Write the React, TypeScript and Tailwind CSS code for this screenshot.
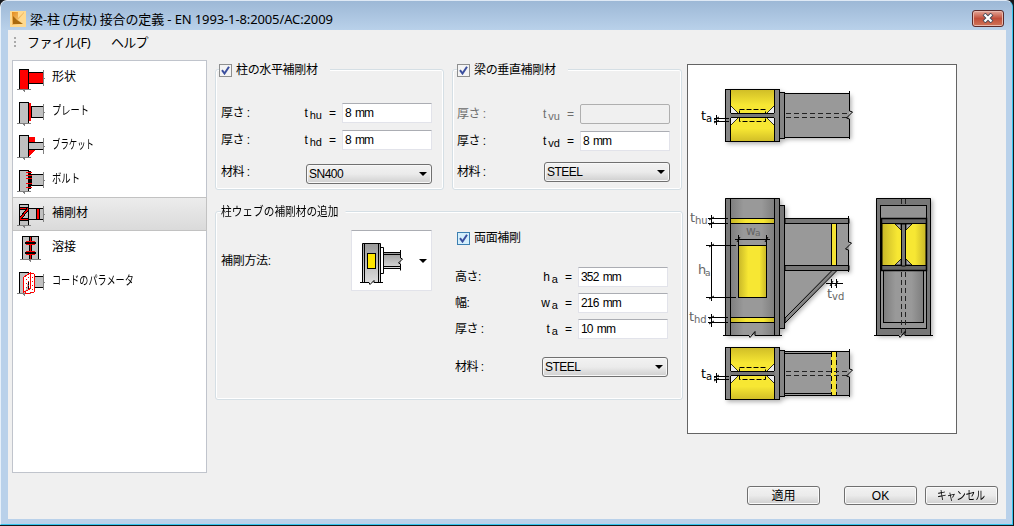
import type { ReactNode } from 'react';

const ui = "font-['Liberation_Sans','Noto_Sans_CJK_JP',sans-serif]";

function Col({ top = 7.5, fill = '#c0c0c0' }: { top?: number; fill?: string }) {
  return (
    <>
      <rect x="19.5" y={top} width="9" height={28.5 - top} fill={fill} stroke="#000" />
      <path d="M17 28.5H31M23 28.5l2 2M43.5 9V25" stroke="#808080" fill="none" />
    </>
  );
}

const beam = (x: number, y = 11.5, h = 11, fill = '#c0c0c0') => (
  <>
    <rect x={x} y={y} width={43.5 - x} height={h} fill={fill} />
    <path d={`M43 ${y}H${x}V${y + h}H43`} fill="none" stroke="#000" />
    <path d="M43.5 9V25M43 18l2-1" stroke="#808080" />
  </>
);

const icons: Record<string, ReactNode> = {
  shape: <><Col top={8.5} fill="#f00" />{beam(28.5, 11.5, 11, '#f00')}</>,
  plate: <><Col />{beam(31.5)}<rect x="29" y="8" width="2" height="17.5" fill="#f00" /></>,
  bracket: <><Col top={6.5} />{beam(28.5, 13.5, 7)}<path d="M29 8h6v5h-6zM29 21h6l-6 6z" fill="#f00" /></>,
  bolt: (
    <>
      <Col />{beam(31.5)}
      <rect x="28" y="8" width="3" height="18" fill="#000" />
      <path d="M26 9.5h6M26 12.5h6M26 15.5h6M26 20.5h6M26 24.5h6" stroke="#f00" />
    </>
  ),
  stiff: (
    <>
      <Col />{beam(28.5)}
      <path d="M20 11H28M20 22.5H28" stroke="#000" strokeWidth="3" />
      <path d="M20 11.5H28M20 22.5H28" stroke="#f00" />
      <path d="M20 22L28 12" stroke="#000" strokeWidth="3" />
      <path d="M20 22L28 12" stroke="#f00" strokeWidth="1.2" />
      <path d="M36.5 12v10M39.5 12v10" stroke="#000" />
      <path d="M38 12v10" stroke="#f00" strokeWidth="2" />
    </>
  ),
  weld: (
    <>
      <rect x="22.5" y="5.5" width="16" height="23" fill="#c0c0c0" stroke="#000" />
      <path d="M20 28.5h21M29 28.5l2 2" stroke="#808080" />
      <path d="M30.5 6v22" stroke="#000" strokeWidth="3" />
      <path d="M30.5 6v22M26 10.5h9M26 20.5h9M26 13.5h9M26 23.5h9" stroke="#f00" />
      <path d="M25 12h11M25 22h11" stroke="#000" strokeWidth="2" />
    </>
  ),
  code: (
    <>
      <Col />{beam(32.5)}
      <path d="M23.5 12.5l7-5v16l-7 4zM25 27l1 2 8-2V9l-3-1" fill="#fff" stroke="#f00" />
      <path d="M26 14h1M28 12h1M26 18h1M28 16h1M26 22h1M28 20h1M32 12h1M32 16h1M32 20h1M32 24h1M26 25h1" stroke="#f00" />
    </>
  ),
};

const items = [
  ['shape', '形状', ''],
  ['plate', 'プレート', 'scale-x-[0.77]'],
  ['bracket', 'ブラケット', 'scale-x-[0.7]'],
  ['bolt', 'ボルト', 'scale-x-[0.78]'],
  ['stiff', '補剛材', ''],
  ['weld', '溶接', ''],
  ['code', 'コードのパラメータ', 'scale-x-[0.76]'],
];

function Check({ label, focus = false, className = '' }: { label: string; focus?: boolean; className?: string }) {
  return (
    <div className={`flex w-fit items-center bg-[#f0f0f0] pr-3 leading-[14px] ${className}`}>
      <span className={`mr-1 flex size-[13px] items-center justify-center border ${focus ? 'border-[#3c7fb1] bg-[#d5effc]' : 'border-[#8e8f8f] bg-[#f4f4f4]'}`}>
        <svg width="9" height="9" viewBox="0 0 9 9"><path d="M1 4.2L3.5 7.5L8 .8" fill="none" stroke="#3b4f9e" strokeWidth="2" /></svg>
      </span>
      <span className="tracking-[-0.35px]">{label}</span>
    </div>
  );
}

interface FieldProps {
  label: string;
  base: string;
  sub: string;
  value: string;
  disabled?: boolean;
  className?: string;
}

function Field({ label, base, sub, value, disabled = false, className = '' }: FieldProps) {
  return (
    <div className={`flex h-[20px] items-center ${disabled ? 'text-[#6d6d6d]' : 'text-black'} ${className}`}>
      <span className="-ml-px tracking-[-0.5px]">{label}</span>
      <span className="ml-auto flex items-baseline text-[12px]">
        {base}
        <span className="relative top-[2px] ml-[2px] text-[11px]">{sub}</span>
        <span className="ml-[7px] mr-[6px]">=</span>
      </span>
      <span className={`flex h-[20px] w-[90px] items-center border pl-[2px] tracking-[-0.8px] [word-spacing:1.5px] ${disabled ? 'rounded-[2px] border-[#afafaf] bg-[#f0f0f0]' : 'border-[#e2e3ea] border-t-[#abadb3] bg-white'}`}>
        {value}
      </span>
    </div>
  );
}

function Material({ value, className = '', labelClass = '' }: { value: string; className?: string; labelClass?: string }) {
  return (
    <div className={`flex h-[20px] items-center ${className}`}>
      <span className={`-ml-px tracking-[-0.5px] ${labelClass}`}>材料 :</span>
      <span className="ml-auto flex h-[20px] w-[126px] items-center justify-between rounded-[3px] border border-[#707070] bg-linear-to-b from-[#f2f2f2] via-[#ebebeb] via-50% to-[#cfcfcf] pl-[2px] pr-[4px] tracking-[-0.5px] shadow-[inset_0_0_0_1px_#f8f8f8]">
        {value}
        <svg width="8" height="4" viewBox="0 0 8 4"><path d="M0 0h8L4 4z" /></svg>
      </span>
    </div>
  );
}

const group = 'border border-[#d5dfe5] rounded-[3px] shadow-[inset_0_0_0_1px_#fff]';

function PlanView({ dy, bottom = false }: { dy: number; bottom?: boolean }) {
  return (
    <g transform={`translate(0 ${dy})`}>
      <g filter="url(#shadow)">
        <rect x="725.5" y="89.5" width="54" height="52" fill="#858585" stroke="#000" />
        <rect x="779.5" y="92.5" width="5" height="46" fill="#858585" stroke="#000" />
        <rect x="784.5" y="93.5" width="65" height="44" fill="#999" />
      </g>
      <path d="M849 93.5H784.5V137.5H849" fill="none" stroke="#000" />
      <rect x="730.5" y="89.5" width="44" height="52" fill="url(#yv)" stroke="#000" />
      <path d="M731 106l7 7h-7zM774 106l-7 7h7zM731 125l7-7h-7zM774 125l-7-7h7z" fill="#ececec" />
      <path d="M731 106l7 7M774 106l-7 7M731 125l7-7M774 125l-7-7" stroke="#000" strokeWidth=".8" />
      <rect x="739.5" y="109.5" width="26" height="12" fill="none" stroke="#000" strokeDasharray="5 2" />
      <rect x="730" y="113" width="45" height="5" fill="#777" />
      <path d="M731 113.5h43M731 117.5h43" stroke="#000" />
      {bottom && (
        <>
          <path d="M785 95.5h46M785 135.5h46" stroke="#000" />
          <rect x="831" y="94" width="5" height="43" fill="#f5e333" />
          <path d="M831.5 94v43M836.5 94v43" stroke="#000" strokeDasharray="5 3" />
        </>
      )}
      <path d="M786 113.5h62M786 117.5h62" stroke="#222" strokeDasharray="5 3" />
      <path d="M849.5 91v20l3 1-6 6 3 1v20" fill="none" stroke="#000" />
      <path d="M714 118.5h15M714 121.5h15M716.5 115v10M714 120l5-3M714 123l5-3" stroke="#000" fill="none" />
      <text x="701" y="120" fontSize="13">t</text>
      <text x="706" y="122" fontSize="10">a</text>
    </g>
  );
}

function Drawing() {
  return (
    <svg width="268" height="368" viewBox="688 65 268 368" fontFamily="DejaVu Sans, sans-serif">
      <defs>
        <linearGradient id="yv" x2="0" y2="1"><stop stopColor="#d0bd27" /><stop offset=".3" stopColor="#f7e733" /><stop offset=".75" stopColor="#f7e733" /><stop offset="1" stopColor="#d0bd27" /></linearGradient>
        <linearGradient id="yh"><stop stopColor="#c8b728" /><stop offset=".35" stopColor="#f7e733" /><stop offset=".75" stopColor="#f7e733" /><stop offset="1" stopColor="#c8b728" /></linearGradient>
        <linearGradient id="gh"><stop stopColor="#7d7d7d" /><stop offset=".3" stopColor="#999" /><stop offset=".7" stopColor="#999" /><stop offset="1" stopColor="#7d7d7d" /></linearGradient>
        <filter id="shadow" x="-10%" y="-10%" width="125%" height="125%"><feDropShadow dx="2" dy="2" stdDeviation="2" floodOpacity=".3" /></filter>
      </defs>
      <PlanView dy={0} />
      <PlanView dy={258} bottom />

      <g filter="url(#shadow)">
        <rect x="725" y="198" width="55" height="137" fill="#777" />
        <rect x="779.5" y="205.5" width="5" height="123" fill="#777" stroke="#000" />
        <path d="M785 218h64v53h-13l-51 52z" fill="#999" />
      </g>
      <rect x="730" y="198" width="45" height="137" fill="url(#gh)" />
      <path d="M725.5 335V198.5H779.5V335M730.5 198v137M774.5 198v137" fill="none" stroke="#000" />
      <path d="M779.5 205.5h5v123h-5z" fill="#777" stroke="#000" />
      <rect x="730.5" y="218.5" width="44" height="5" fill="url(#yh)" stroke="#000" />
      <rect x="730.5" y="317.5" width="44" height="5" fill="url(#yh)" stroke="#000" />
      <rect x="738.5" y="245.5" width="28" height="52" fill="url(#yh)" stroke="#000" />
      <path d="M785 218.5h64v5h-64zM785 265.5h64v5h-64z" fill="#777" stroke="#000" />
      <rect x="831.5" y="223.5" width="5" height="42" fill="#f5e333" stroke="#000" />
      <path d="M831.5 271L785 318v5l51.5-52" fill="#858585" stroke="#000" />
      <path d="M848.5 216v26l3 1-6 6 3 1v22M723 335.5h26l1 2 5-6v4h27" fill="none" stroke="#000" />
      <path d="M708 218.5h20M708 223.5h20M711.5 215v13M709 220l5-3M709 225l5-3M708 317.5h20M708 322.5h20M711.5 314v13M709 319l5-3M709 324l5-3M706 245.5h30M706 297.5h30M711.5 242v59M709 247l5-3M709 299l5-3M735 239.5h35M738.5 235v10M766.5 235v10M737 242l3-5M765 242l3-5M826 283.5h17M831.5 279v9M836.5 279v9M830 286l3-5M835 286l3-5" fill="none" stroke="#000" />
      <g fill="#666">
        <text x="690" y="222" fontSize="13">t</text><text x="695" y="224" fontSize="10">hu</text>
        <text x="689" y="321" fontSize="13">t</text><text x="694" y="323" fontSize="10">hd</text>
        <text x="698" y="274" fontSize="13">h</text><text x="705" y="276" fontSize="9">a</text>
        <text x="746" y="235" fontSize="12">w</text><text x="755" y="236" fontSize="9">a</text>
        <text x="827" y="298" fontSize="13">t</text><text x="832" y="300" fontSize="10">vd</text>
      </g>

      <rect x="876" y="198" width="55" height="137" fill="#777" filter="url(#shadow)" />
      <path d="M876.5 335V198.5H930.5V335" fill="none" stroke="#000" />
      <rect x="880.5" y="205.5" width="46" height="123" fill="#929292" stroke="#000" />
      <rect x="883.5" y="270.5" width="40" height="52" fill="url(#gh)" stroke="#000" />
      <rect x="881.5" y="218.5" width="45" height="52" fill="#666" stroke="#000" strokeWidth="1.5" />
      <rect x="882" y="223.5" width="44" height="42" fill="url(#yh)" stroke="#000" />
      <path d="M895 224h6v6zM912 224h-6v6zM895 265h6v-6zM912 265h-6v-6z" fill="#aaa" stroke="#000" strokeWidth=".8" />
      <path d="M901.5 224h4v42h-4z" fill="#777" stroke="#000" />
      <path d="M901.5 199v7M905.5 199v7M901.5 272v63M905.5 272v63" stroke="#222" strokeDasharray="5 3" />
      <path d="M874 335.5h25l1 2 5-6v4h28" fill="none" stroke="#000" />
    </svg>
  );
}

function MethodPicker() {
  return (
    <div className="mr-[10px] flex h-[61px] w-[81px] items-center border border-[#e2e3ea] border-t-[#abadb3] bg-white">
      <svg width="79" height="59" viewBox="352 231 79 59">
        <defs><linearGradient id="mc" x2="0" y2="1"><stop stopColor="#999" /><stop offset="1" stopColor="#ddd" /></linearGradient></defs>
        <rect x="362.5" y="243.5" width="18" height="39" fill="url(#mc)" />
        <rect x="383" y="252" width="18" height="17" fill="url(#mc)" />
        <path d="M362.5 282V243.5h18V282M364.5 244v38M378.5 244v38M380.5 247.5h3v26h-3M383 252.5h18M383 254.5h18M383 266.5h18M383 268.5h18M400.5 250v8l2 1-4 4 2 1v6.5M360 282.5h9l1 2 4-4v2h9" fill="none" stroke="#000" />
        <rect x="367.5" y="253.5" width="8" height="15" fill="#ffe600" stroke="#000" />
        <path d="M419 259h8l-4 4z" />
      </svg>
    </div>
  );
}

function Button({ children }: { children: ReactNode }) {
  return (
    <button className="flex h-[19px] w-[73px] items-center justify-center rounded-[3px] border border-[#707070] bg-linear-to-b from-[#f2f2f2] via-[#ebebeb] via-50% to-[#cfcfcf] leading-[16px] shadow-[inset_0_0_0_1px_#fafafa]">
      {children}
    </button>
  );
}

export default function App() {
  return (
    <div className="h-[526px] w-[1014px] bg-[#16181c]">
      <div className={`flex h-[525px] w-[1013px] flex-col overflow-hidden rounded-t-[7px] border border-t-[#dfe9f5] border-l-[#e6f0fa] border-r-[#35c5ee] border-b-[#35c5ee] bg-[#b9d1ea] pr-[6px] pb-[5px] pl-[7px] text-[12px] text-black ${ui}`}>
        <header className="-ml-[7px] -mr-[6px] flex h-[29px] shrink-0 items-center bg-linear-to-b from-[#9db8d6] to-[#b9d1ea] pt-[7px] pl-[9px]">
          <svg width="16" height="16" viewBox="0 0 16 16">
            <defs><linearGradient id="logo" x2="1" y2="1"><stop stopColor="#e38b1c" /><stop offset="1" stopColor="#ffe2a0" /></linearGradient></defs>
            <rect width="16" height="16" fill="#ffd98e" />
            <path d="M2 1h6v6l6-6v1l-6 7 6 4-12 1z" fill="url(#logo)" />
            <path d="M3 13V5l4 4 6 4z" fill="#a8690e" />
          </svg>
          <h1 className="ml-[4px] whitespace-nowrap font-['Noto_Sans','Noto_Sans_CJK_JP',sans-serif] text-[13px] leading-[16px] tracking-[-0.12px]">梁-柱 (方杖) 接合の定義 - EN 1993-1-8:2005/AC:2009</h1>
          <button className="mr-[8px] -mt-[2px] ml-auto flex h-[17px] w-[32px] items-center justify-center rounded-[3px] border border-[#5b2a2a] bg-linear-to-b from-[#e3a698] via-[#c14e3a] via-50% to-[#cf7457] shadow-[inset_0_0_0_1px_#e9b8ac]">
            <svg width="12" height="10" viewBox="0 0 12 10"><path d="M2 1l8 8M10 1l-8 8" stroke="#454a58" strokeWidth="4" /><path d="M2.5 1.5l7 7M9.5 1.5l-7 7" stroke="#fff" strokeWidth="2.3" /></svg>
          </button>
        </header>

        <div className="flex min-h-0 flex-1 flex-col bg-[#f0f0f0]">
          <nav className="flex h-[26px] shrink-0 items-center pl-[6px] font-['Noto_Sans','Noto_Sans_CJK_JP',sans-serif] text-[13px] leading-[16px]">
            <svg width="2" height="12" viewBox="0 0 2 12"><path d="M1 0v12" stroke="#aaa" strokeWidth="2" strokeDasharray="2 2" /></svg>
            <span className="-mt-[2px] ml-[11px] w-[84px] tracking-[-0.5px]">ファイル(F)</span>
            <span className="-mt-[2px] tracking-[-0.8px]">ヘルプ</span>
          </nav>

          <div className="flex h-[417px] shrink-0 pl-[4px]">
            <ul className="mt-[4px] h-[413px] w-[195px] shrink-0 border border-[#c0c4cc] bg-white">
              {items.map(([icon, label, fit]) => (
                <li key={icon} className={`flex h-[34px] items-center ${icon === 'stiff' ? '-mx-px border border-[#c2c2c2] bg-linear-to-b from-[#ececec] to-[#dadada] pl-[4px]' : 'pl-[4px]'}`}>
                  <svg width="30" height="34" viewBox="17 0 30 34" className="shrink-0" shapeRendering="crispEdges">{icons[icon]}</svg>
                  <span className={`-mt-[2px] ml-[5px] origin-left whitespace-nowrap ${fit}`}>{label}</span>
                </li>
              ))}
            </ul>

            <div className="ml-[8px] w-[468px] shrink-0">
              <div className="flex pt-[13px]">
                <section className={`h-[121px] w-[229px] pr-[11px] pl-[6px] ${group}`}>
                  <Check label="柱の水平補剛材" className="-mt-[7px] -ml-[3px]" />
                  <Field label="厚さ :" base="t" sub="hu" value="8 mm" className="mt-[26px]" />
                  <Field label="厚さ :" base="t" sub="hd" value="8 mm" className="mt-[7px]" />
                  <Material value="SN400" className="mt-[14px]" labelClass="mb-[5px]" />
                </section>
                <section className={`ml-[8px] h-[121px] w-[230px] pr-[11px] pl-[5px] ${group}`}>
                  <Check label="梁の垂直補剛材" className="-mt-[7px] -ml-[1px]" />
                  <Field label="厚さ :" base="t" sub="vu" value="" disabled className="mt-[27px]" />
                  <Field label="厚さ :" base="t" sub="vd" value="8 mm" className="mt-[7px]" />
                  <Material value="STEEL" className="mt-[11px]" />
                </section>
              </div>

              <section className={`mt-[21px] h-[189px] w-[468px] ${group}`}>
                <h2 className="-mt-[7px] ml-[5px] w-fit origin-left scale-x-[0.89] bg-[#f0f0f0] pr-2 leading-[14px]">柱ウェブの補剛材の追加</h2>
                <div className="flex">
                  <div className="mt-[11px] flex h-[61px] w-[226px] items-center justify-between pl-[5px]">
                    <span className="tracking-[-0.3px]">補剛方法:</span>
                    <MethodPicker />
                  </div>
                  <div className="ml-[14px] w-[212px] pt-[12px]">
                    <Check label="両面補剛" focus className="ml-px" />
                    <Field label="高さ:" base="h" sub="a" value="352 mm" className="mt-[22px]" />
                    <Field label="幅:" base="w" sub="a" value="216 mm" className="mt-[6px]" />
                    <Field label="厚さ :" base="t" sub="a" value="10 mm" className="mt-[6px]" />
                    <Material value="STEEL" className="mt-[18px]" />
                  </div>
                </div>
              </section>
            </div>

            <figure className="mt-[8px] ml-[4px] h-[370px] w-[270px] shrink-0 border border-[#646464] bg-white">
              <Drawing />
            </figure>
          </div>

          <footer className="flex justify-end pt-[13px] pr-[8px]">
            <Button>適用</Button>
            <div className="ml-[24px] flex gap-[8px]">
              <Button>OK</Button>
              <Button><span className="scale-x-[0.8] whitespace-nowrap">キャンセル</span></Button>
            </div>
          </footer>
        </div>
      </div>
    </div>
  );
}
